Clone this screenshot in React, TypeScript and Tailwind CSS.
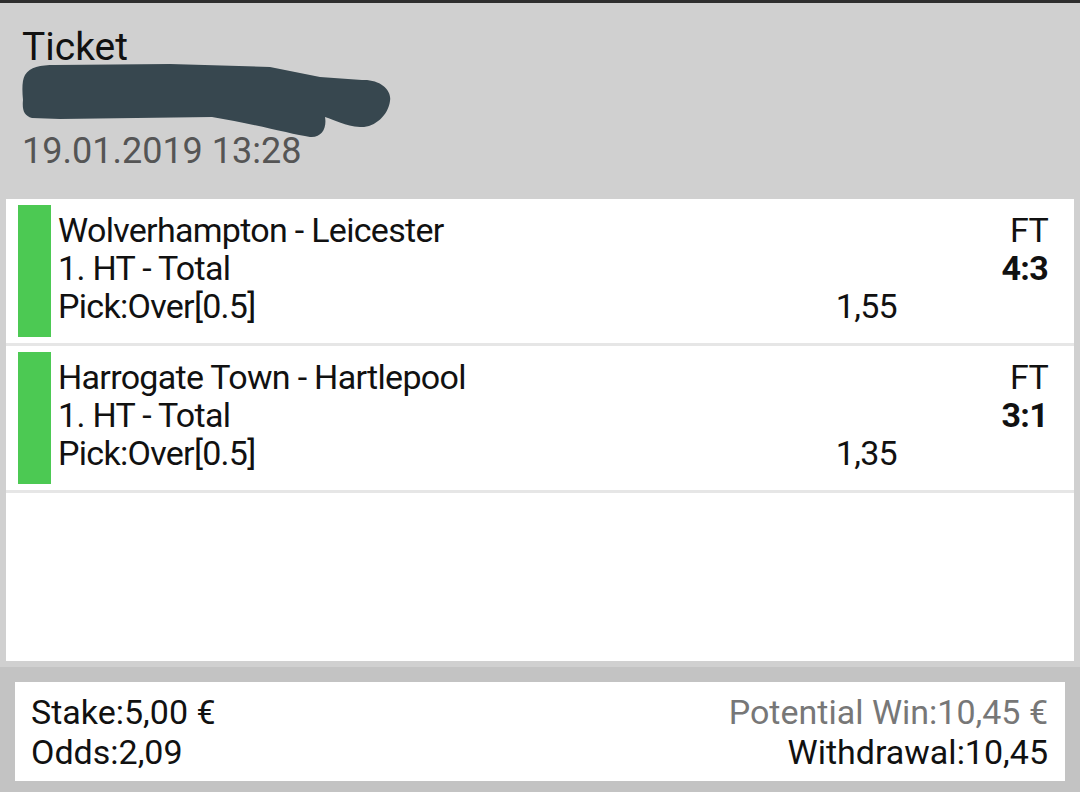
import React from 'react';

const BETS = [
  { id: 'b1', match: 'Wolverhampton - Leicester', market: '1. HT - Total', pick: 'Pick:Over[0.5]', odds: '1,55', status: 'FT', score: '4:3' },
  { id: 'b2', match: 'Harrogate Town - Hartlepool', market: '1. HT - Total', pick: 'Pick:Over[0.5]', odds: '1,35', status: 'FT', score: '3:1' },
];

export default function App() {
  return (
    <div className="w-[1080px] h-[792px] flex flex-col bg-[#d0d0d0] text-[#111] font-['Roboto',sans-serif] overflow-hidden">
      {/* Header */}
      <div className="border-t-[3px] border-[#2e2e2e] pl-[22px] pt-[18px] pb-[22px]">
        <div className="text-[39px] leading-[52px]">Ticket</div>
        <div className="relative h-[52px]">
          {/* redacted ticket number */}
          <svg className="absolute -left-[22px] -top-[73px] w-[420px] h-[160px]" viewBox="0 0 420 160">
            <path
              d="M25,75 C30,67 40,65 55,65 L170,64 L270,67 L320,77 L362,80 C380,79 392,90 390,101 C388,116 374,128 360,127 C345,126 335,120 325,117 C327,128 322,138 310,137 C290,134 250,123 212,117 L60,119 L32,118 C24,116 22,110 23,100 C22,90 22,80 25,75 Z"
              fill="#37474f"
            />
          </svg>
        </div>
        <div className="text-[36px] leading-[52px] text-[#555]">19.01.2019 13:28</div>
      </div>

      {/* Bets list */}
      <div className="flex-1 px-[6px] pb-[6px]">
        <div className="h-full bg-white">
          {BETS.map((bet) => (
            <div key={bet.id} className="flex pl-[12px] pr-[26px] pt-[6px] pb-[6px] border-b-[3px] border-[#e6e6e6]">
              <div className="w-[33px] h-[132px] bg-[#4cc953]" />
              <div className="flex-1 pl-[7px] pt-[6px] text-[34px] leading-[38px] tracking-[-0.7px]">
                <div className="flex">
                  <span className="flex-1">{bet.match}</span>
                  <span className="w-[151px] text-right">{bet.status}</span>
                </div>
                <div className="flex">
                  <span className="flex-1">{bet.market}</span>
                  <span className="w-[151px] text-right font-bold">{bet.score}</span>
                </div>
                <div className="flex">
                  <span className="flex-1">{bet.pick}</span>
                  <span className="w-[120px] text-right">{bet.odds}</span>
                  <span className="w-[151px]" />
                </div>
              </div>
            </div>
          ))}
        </div>
      </div>

      {/* Summary */}
      <div className="bg-[#c3c3c3] px-[15px] pt-[15px] pb-[11px]">
        <div className="bg-white flex justify-between pl-[16px] pr-[17px] pt-[10px] pb-[9px] text-[34px] leading-[40px]">
          <div>
            <div>Stake:5,00 €</div>
            <div>Odds:2,09</div>
          </div>
          <div className="text-right">
            <div className="text-[#777]">Potential Win:10,45 €</div>
            <div>Withdrawal:10,45</div>
          </div>
        </div>
      </div>
    </div>
  );
}
